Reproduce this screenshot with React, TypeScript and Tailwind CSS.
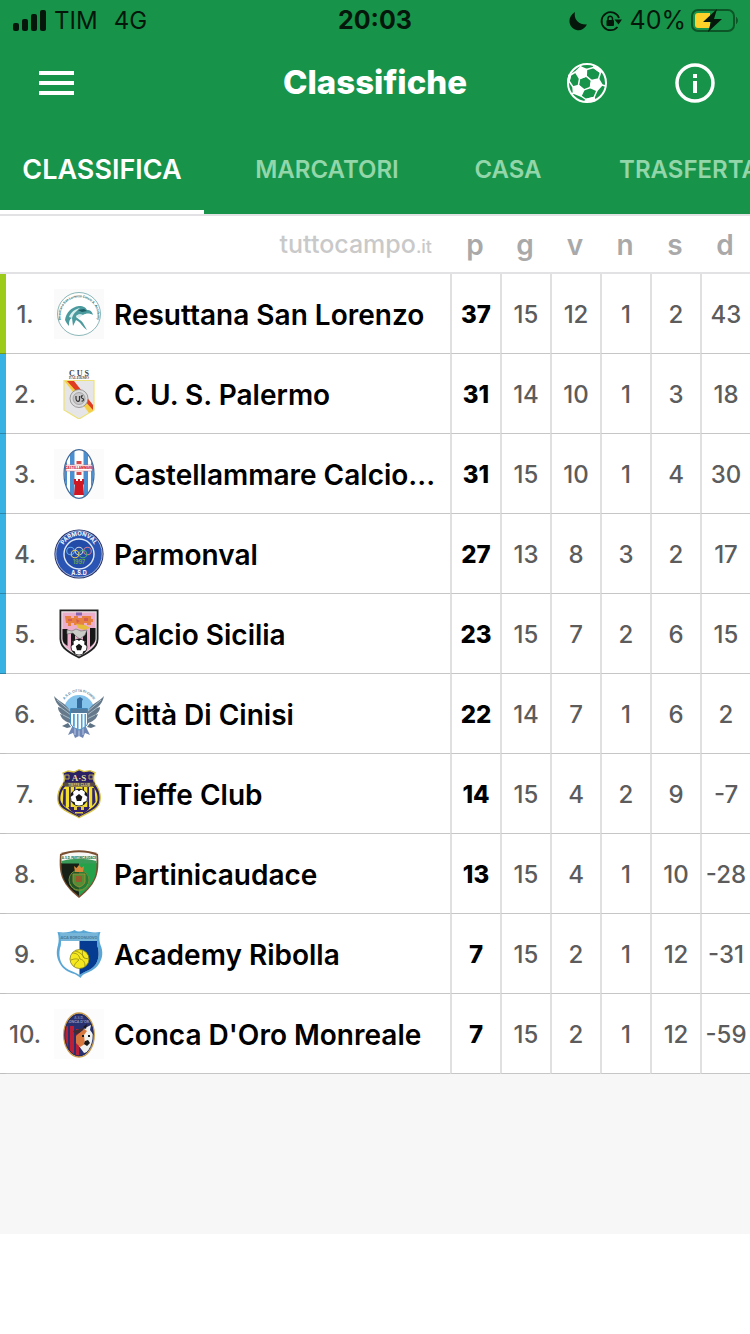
import type { ReactNode } from 'react'

type Team = {
  name: string
  zone: 'promotion' | 'playoff' | 'none'
  stats: number[]
  crest: ReactNode
}

const zoneColors = {
  promotion: 'bg-[#9ccb1a]',
  playoff: 'bg-[#38b2e2]',
  none: 'bg-white',
}

const columns = ['p', 'g', 'v', 'n', 's', 'd']

const tabs = [
  { label: 'MARCATORI', width: 'w-[246px]' },
  { label: 'CASA', width: 'w-[116px]' },
  { label: 'TRASFERTA', width: 'w-[246px]' },
]

function MiniBall({ cx, cy, r }: { cx: number; cy: number; r: number }) {
  return (
    <g transform={`translate(${cx} ${cy}) scale(${r / 10})`}>
      <circle r="10" fill="#fff" stroke="#222" strokeWidth="1" />
      <path d="M0-4 4-1 2.500 4h-5L-4-1zM-3-10 0-7.500 3-10zM7-7 6.500-3 10-1 9.500-5zM9 4 5 5.500 4.500 9 7 7zM-9 4-5 5.500-4.500 9-7 7zM-7-7-6.500-3-10-1-9.500-5z" fill="#161616" />
    </g>
  )
}

const resuttana = (
  <>
    <rect width="50" height="50" fill="#fafafa" />
    <circle cx="25" cy="25" r="21.500" fill="#fff" stroke="#5b9a9c" strokeWidth="0.700" />
    <path id="resArc" d="M8 34A18.500 18.500 0 1 1 42 34" fill="none" />
    <text fontSize="3.200" fill="#27747a" fontWeight="700">
      <textPath href="#resArc" startOffset="50%" textAnchor="middle">Resuttana San Lorenzo Calcio A. Academy</textPath>
    </text>
    <path d="M11 31c1-7 6-13 14-14 5 0 7 2 8 4 3 0 5 1 6 5-3-2-7-2-10 0-3-1-6-1-7 2 2 2 5 3 7 6l4 7c-5-3-6-8-11-10l-3 6-1-8c-3 1-3 5-3 8-2-2-3-4-4-6z" fill="#4b9a9e" />
    <path d="M15 28c2-5 6-8 11-9-3 3-6 4-8 10zM22 27c2-2 5-2 7-1l-4 3z" fill="#d6eeee" />
    <path d="M24 21l6-1 3 2-5 1z" fill="#1c5e64" />
  </>
)

const cus = (
  <>
    <text x="25" y="6.500" textAnchor="middle" fontSize="8" fill="#444" className="font-['Liberation_Serif',serif]">C U S</text>
    <text x="25" y="10.200" textAnchor="middle" fontSize="4" fill="#555" className="font-['Liberation_Serif',serif]">PALERMO</text>
    <path d="M10 11.500h30V41L25 50 10 41z" fill="#e6e6e8" stroke="#eee27a" strokeWidth="1.200" />
    <path d="M10.500 12h7L39 38v4l-4 2z" fill="#f4cf45" />
    <path d="M13 12h7l19 24v5z" fill="#e03d20" />
    <circle cx="25" cy="29.500" r="9" fill="#dcdcde" stroke="#888" strokeWidth="0.800" />
    <circle cx="25" cy="29.500" r="6" fill="#c8c8ca" stroke="#888" strokeWidth="0.600" />
    <path d="M22 27v3c.5 3 3 3 3.500 1v-4M29 27c-2-1-2.500 2-.5 2.500s1 3-1 2.500" fill="none" stroke="#333" strokeWidth="1.200" />
  </>
)

const castellammare = (
  <>
    <rect width="50" height="50" fill="#fbfbfb" />
    <clipPath id="casClip"><ellipse cx="25" cy="25" rx="14.500" ry="24" /></clipPath>
    <g clipPath="url(#casClip)">
      <rect width="50" height="50" fill="#fff" />
      <path d="M16 0h4.500v50H16zM29.500 0H34v50h-4.500zM10 5h3v40h-3zM37 5h3v40h-3z" fill="#4b8fd0" />
      <path d="M12 16h26v6H12z" fill="#fff" stroke="#d66" strokeWidth="0.500" />
      <path d="M22.500 12h5v3h-5zM22.500 23h5v3h-5z" fill="#d64a4b" />
      <text x="25" y="20.200" textAnchor="middle" fontSize="3" fontWeight="800" fill="#cf2024">CASTELLAMMARE</text>
      <path d="M20 30h2v2h2v-2h2v2h2v-2h2v5l-1 1 1 10H20l1-10-1-1z" fill="#cf1724" />
    </g>
    <ellipse cx="25" cy="25" rx="15" ry="24.300" fill="none" stroke="#40699b" strokeWidth="1.200" />
  </>
)

const parmonval = (
  <>
    <circle cx="25" cy="25" r="24.600" fill="#26336c" />
    <circle cx="25" cy="25" r="23.200" fill="#2b55b4" stroke="#dfe7f5" strokeWidth="0.700" />
    <circle cx="25" cy="25" r="15" fill="#234ba8" stroke="#e2ebf7" strokeWidth="1.400" />
    <path id="parArc" d="M8 20A17.500 17.500 0 0 1 42 20" fill="none" />
    <text fontSize="5.800" fontWeight="700" fill="#fff">
      <textPath href="#parArc" startOffset="50%" textAnchor="middle">PARMONVAL</textPath>
    </text>
    <text x="25" y="46" textAnchor="middle" fontSize="5.500" fontWeight="700" fill="#fff">A.S.D</text>
    <g fill="none" strokeWidth="1.100">
      <circle cx="16.500" cy="22" r="3.800" stroke="#62aceb" />
      <circle cx="25" cy="22" r="3.800" stroke="#c5ced8" />
      <circle cx="33.500" cy="22" r="3.800" stroke="#d57c92" />
      <circle cx="21" cy="25" r="3.800" stroke="#e1c95b" />
      <circle cx="29" cy="25" r="3.800" stroke="#4da978" />
    </g>
    <text x="25" y="34.500" textAnchor="middle" fontSize="5.500" fontWeight="700" fill="#64a84b">1997</text>
  </>
)

const sicilia = (
  <>
    <path d="M5.500.5h39V30c0 10-11 15-19.500 19.500C16.500 45 5.500 40 5.500 30z" fill="#222" />
    <path d="M7.300 2.300h35.400V30c0 8-9 13-17.700 17.500C16 43 7.300 38 7.300 30z" fill="#e8e8e8" />
    <path d="M8.500 3.500h33V30c0 8-8 12-16.500 16.500C16.500 42 8.500 38 8.500 30z" fill="#ecaecb" />
    <path d="M8.500 20h5v17c-3-2-5-4-5-7zM17 22h4v21l-4-3zM29 22h4v18l-4 3zM36 19h5.500v11c0 3-2 5-5.500 8z" fill="#171717" />
    <path d="M11 7h6v2h3V7h4v2h4V7h9v3h2v3h-2v3h-4v-2h-3v2H20v-2h-3v3h-3v-3h-2z" fill="#e7813f" />
    <path d="M14 10h4v2h-4zM22 10l4 2-3 2zM30 9h4v3h-4z" fill="#d55d54" />
    <path d="M22 15l9 1 5 3-6 2-6-2z" fill="#e7bd3c" />
    <path d="M22 3.500h6v3h-6z" fill="#8a65ae" />
    <path d="M13 21l5 1 4-2 5 2 6-1-2 5-5 4-3-2-4-4-6 1z" fill="#cbccc8" stroke="#666" strokeWidth="0.600" />
    <MiniBall cx={25} cy={38} r={8} />
  </>
)

const cinisi = (
  <>
    <circle cx="25" cy="21" r="15" fill="#84c4ec" />
    <path id="cinArc" d="M9 14A17 17 0 0 1 41 14" fill="none" />
    <text fontSize="3.200" fontWeight="700" fill="#4a86a8">
      <textPath href="#cinArc" startOffset="50%" textAnchor="middle">A.S.D. CITTA DI CINISI</textPath>
    </text>
    <g fill="#66798a">
      <path d="M0 7c5 6 12 7 16 15v12C9 32 7 28 6 25l3 1c-4-3-5-5-5-8l3 1C3 15 1 12 0 7z" />
      <path d="M50 7c-5 6-12 7-16 15v12c7-2 9-6 10-9l-3 1c4-3 5-5 5-8l-3 1c4-4 6-7 7-12z" />
    </g>
    <path d="M3 11l14 12M6 18l11 8M9 26l8 4M47 11 33 23M44 18l-11 8M41 26l-8 4" stroke="#b8cad6" strokeWidth="0.800" />
    <path d="M23 10l3-2 3 2-1 2v8h-5z" fill="#356b9c" />
    <path d="M18 38l-4 8 5-2 2 5 4-2 4 2 2-5 5 2-4-8z" fill="#6f86b5" />
    <path d="M21 39v7M25 39v8M29 39v7" stroke="#c4d2ea" strokeWidth="0.900" />
    <path d="M16.500 19.500h17V34c0 3-4 5-8.500 7-4.500-2-8.500-4-8.500-7z" fill="#f6fbff" stroke="#4289bb" strokeWidth="1" />
    <path d="M17 20h16v4H17z" fill="#517a9c" />
    <path d="M19 25h1.800v13L19 37zM23 25h1.500v15.500l-1.500-.5zM27 25h1.500v14.500l-1.500.5zM30.500 25h1.500v12l-1.500 1z" fill="#4ea2d9" />
    <path d="M8 37l6-3 3 4-4 1zM42 37l-6-3-3 4 4 1z" fill="#5d7285" />
  </>
)

const tieffe = (
  <>
    <path d="M25 .7l5 2 6-1 5 2c-2 4-2 7 0 11 4 5 6 10 5 17-1 9-13 12-21 17C17 44 5 41 4 32c-1-7 1-12 5-17 2-4 2-7 0-11l5-2 6 1z" fill="#2b2164" stroke="#d9c443" strokeWidth="1.300" />
    <path d="M11 17.500h28c4 5 5 9 4.500 14C42 38 34 41 25 47 16 41 8 38 6.500 31.500 6 26.500 7 22.500 11 17.500z" fill="#f3df2c" />
    <path d="M9.500 20h2.300v18l-3-3zM15 18h1.700v23l-1.700-1zM33.300 18H35v22l-1.700 1zM38.200 19h2.300l1 14-3.300 4zM20 18h1.500v6H20zM28.500 18H30v6h-1.500z" fill="#30266c" />
    <path d="M14 38l22 0-3 4-8 5-8-5z" fill="#32216d" />
    <path d="M20 37h3v4h-3zM27 37h3v4h-3zM21 43h8v1.500h-8z" fill="#e0c843" />
    <path d="M9 13.500h32v3.500H9z" fill="#564b45" />
    <text x="25" y="11.500" textAnchor="middle" fontSize="9" fontWeight="700" fill="#e4dc9c" className="font-['Liberation_Serif',serif]">A·S</text>
    <path d="M11 6h4v4h-4zM35 6h4v4h-4z" fill="none" stroke="#b7a655" strokeWidth="1" />
    <text x="25" y="16.500" textAnchor="middle" fontSize="3.500" fontWeight="700" fill="#d8cc83">TIEFFE CLUB</text>
    <MiniBall cx={25} cy={28.5} r={8.5} />
  </>
)

const partinicaudace = (
  <>
    <path d="M6 5C16 0 34 0 44 5c1 17 1 28-19 44C5 33 5 22 6 5z" fill="#7a4f31" />
    <path d="M7.500 6.500C17 2 33 2 42.500 6.500V14h-35z" fill="#f7f7f5" />
    <path d="M7.500 14H25v33C8 34 7.500 25 7.500 14z" fill="#162016" />
    <path d="M25 14h17.500c0 12-1 20-17.500 33z" fill="#25a14a" />
    <path d="M7.500 12C19 9 31 9 42.500 12v2.500h-35z" fill="#3a9b58" />
    <text x="25" y="9.500" textAnchor="middle" fontSize="2.800" fontWeight="800" fill="#267344">A.S.D. PARTINICAUDACE</text>
    <circle cx="25" cy="31" r="10" fill="#276d2e" fillOpacity="0.700" stroke="#6e8b35" strokeWidth="1" />
    <path d="M20 17l2.500 2 2.500-3 2.500 3 2.500-2-1 6h-8z" fill="#d8883a" />
    <path d="M19 25h12v7c0 3-3 5-6 6-3-1-6-3-6-6z" fill="#558d34" stroke="#a8923c" strokeWidth="0.800" />
    <path d="M22 27h6v6h-6z" fill="#9a5b2c" />
    <path d="M16 35c2 5 5 6 9 7 4-1 7-2 9-7" fill="none" stroke="#75953a" strokeWidth="1" />
  </>
)

const ribolla = (
  <>
    <path d="M3.500 3c7 1 14 0 17-2 3 2 6 2 9 0 4 2 10 3 17 2-2 5-1 9 0 13 3 7 2 13-1 18-4 7-11 9-15 11-2 1-3 2-4 4-2-2-4-3-6-4-7-2-12-5-15-11S2 23 4 16c1-4 1-8-.5-13z" fill="#5aa7d6" />
    <path d="M7 12h36c0 3 0 5 1 7 2 10-1 18-9 22-4 2-7 3-9.500 5C23 44 19 43 15 41 7 37 4 29 6 19c1-2 1-4 1-7z" fill="#fff" />
    <path d="M25.500 12H43c0 3 0 5 1 7 2 10-1 18-9 22-4 2-7 3-9.500 5z" fill="#053b91" />
    <path d="M6 4h38l-1 8H7z" fill="#78b6d9" />
    <text x="25" y="9.500" textAnchor="middle" fontSize="3.800" fontWeight="700" fill="#477996">ACA BORGONUOVO</text>
    <circle cx="25.500" cy="30" r="9.500" fill="#f5e81e" stroke="#81801d" strokeWidth="0.800" />
    <path d="M18 24c5 0 7 2 8 6M21 22c5 1 8 4 9 7l5 1M25 31c-3 2-5 5-5 7M26 30c4 1 5 4 5 7M17 31c3-1 6-2 8 0M30 29c-2-3-2-5-1-8" fill="none" stroke="#99921a" strokeWidth="0.900" />
  </>
)

const conca = (
  <>
    <rect width="50" height="50" fill="#fcfcfc" />
    <clipPath id="conClip"><ellipse cx="25" cy="26" rx="15" ry="21.500" /></clipPath>
    <g clipPath="url(#conClip)">
      <rect width="50" height="50" fill="#28306f" />
      <path d="M9 17h5v28H9zM16 17h4v31h-4zM22 20h3v28h-3z" fill="#bb1f38" />
      <path d="M31 19l6-3-1 5 5 7-3 14-8 2-5-7 2-10z" fill="#f0f0ee" />
      <path d="M22 27l8-7 3 2-3 4 1 9-5 3-4-4z" fill="#d9783e" />
      <path d="M29 18l4-3-1 5zM31 32l3-1 2 3-3 3-3-2zM28 26h2v2h-2zM34 26h2v2h-2z" fill="#181818" />
      <path d="M19 22l10-3v2l-7 5z" fill="#3d2d33" />
      <text x="25" y="14" textAnchor="middle" fontSize="3.600" fontWeight="700" fill="#8d95bd">CONCA D'ORO</text>
      <text x="25" y="10" textAnchor="middle" fontSize="3.200" fill="#8d95bd">A.S.D.</text>
    </g>
    <ellipse cx="25" cy="26" rx="15.300" ry="22" fill="none" stroke="#c99a48" strokeWidth="1.300" />
    <ellipse cx="25" cy="26" rx="14.200" ry="20.800" fill="none" stroke="#212a5a" strokeWidth="0.900" />
  </>
)

const teams: Team[] = [
  { name: 'Resuttana San Lorenzo', zone: 'promotion', stats: [37, 15, 12, 1, 2, 43], crest: resuttana },
  { name: 'C. U. S. Palermo', zone: 'playoff', stats: [31, 14, 10, 1, 3, 18], crest: cus },
  { name: 'Castellammare Calcio...', zone: 'playoff', stats: [31, 15, 10, 1, 4, 30], crest: castellammare },
  { name: 'Parmonval', zone: 'playoff', stats: [27, 13, 8, 3, 2, 17], crest: parmonval },
  { name: 'Calcio Sicilia', zone: 'playoff', stats: [23, 15, 7, 2, 6, 15], crest: sicilia },
  { name: 'Città Di Cinisi', zone: 'none', stats: [22, 14, 7, 1, 6, 2], crest: cinisi },
  { name: 'Tieffe Club', zone: 'none', stats: [14, 15, 4, 2, 9, -7], crest: tieffe },
  { name: 'Partinicaudace', zone: 'none', stats: [13, 15, 4, 1, 10, -28], crest: partinicaudace },
  { name: 'Academy Ribolla', zone: 'none', stats: [7, 15, 2, 1, 12, -31], crest: ribolla },
  { name: "Conca D'Oro Monreale", zone: 'none', stats: [7, 15, 2, 1, 12, -59], crest: conca },
]

function StatusBar() {
  return (
    <div className="grid h-10 grid-cols-[1fr_auto_1fr] items-center px-3 pt-0.5 text-2xl text-[#04170a]">
      <div className="flex items-center gap-2">
        <svg width="34" height="22" viewBox="0 0 34 22" fill="currentColor" aria-hidden="true">
          <rect x="1" y="13" width="6" height="8" rx="2" />
          <rect x="10" y="9" width="6" height="12" rx="2" />
          <rect x="19" y="4" width="6" height="17" rx="2" />
          <rect x="28" y="0" width="6" height="21" rx="2" />
        </svg>
        <span>TIM</span>
        <span className="ml-2">4G</span>
      </div>
      <span className="text-[25px] font-bold">20:03</span>
      <div className="flex items-center justify-end">
        <svg width="20" height="20" viewBox="0 0 20 20" fill="currentColor" aria-hidden="true">
          <path d="M7 1C5.500 8 10 14 19 13.500 16.500 18 12.500 20 8.500 19 1 17-2 6.500 7 1z" />
        </svg>
        <svg className="ml-3" width="22" height="22" viewBox="0 0 22 22" aria-hidden="true">
          <path d="M17.500 17A9 9 0 1 1 19 8" fill="none" stroke="currentColor" strokeWidth="1.800" />
          <path d="M14.500 9.500H22l-3.500 5z" fill="currentColor" />
          <rect x="6.500" y="10" width="7.500" height="6" rx="1" fill="currentColor" />
          <path d="M8 10V8.500a2.200 2.200 0 0 1 4.500 0V10" fill="none" stroke="currentColor" strokeWidth="1.500" />
        </svg>
        <span className="ml-2 text-[25px]">40%</span>
        <svg className="ml-1" width="48" height="26" viewBox="0 0 48 26" aria-hidden="true">
          <rect x="2" y="2" width="42" height="21" rx="6" fill="none" stroke="#0b5526" strokeWidth="2" />
          <path d="M46.500 9.500q2 3 0 6z" fill="#0b5526" stroke="#0b5526" />
          <path d="M8 5h12v15H8a3 3 0 0 1-3-3V8a3 3 0 0 1 3-3z" fill="#fcd12a" />
          <path d="M27 1 13 14h8l-3 10 14-13h-8z" fill="#04170a" />
        </svg>
      </div>
    </div>
  )
}

function Header() {
  return (
    <header className="grid h-[86px] grid-cols-[1fr_auto_1fr] items-center px-[35px] text-white">
      <button type="button" aria-label="Menu" className="justify-self-start p-1">
        <svg width="35" height="26" viewBox="0 0 35 26" fill="currentColor">
          <path d="M0 1h35v4H0zM0 11h35v4H0zM0 21h35v4H0z" />
        </svg>
      </button>
      <h1 className="text-[33px] font-extrabold">Classifiche</h1>
      <div className="flex items-center justify-end gap-[68px]">
        <button type="button" aria-label="Partite">
          <svg width="40" height="40" viewBox="0 0 40 40" fill="none" stroke="#fff" strokeWidth="1.500" strokeLinejoin="round">
            <circle cx="20" cy="20" r="19" strokeWidth="2" />
            <path d="M12.600 15.500 19.200 13.100 24.600 17.600 23.400 24.500 16.800 26.900 11.400 22.400z" />
            <path d="M19.500 6.500 26.500 4.500 33.500 9.500 31.500 16M30 27.500 27 34.500 19 36.500 14 33M6 24 2 18 3.500 12 8.500 9M13.500 4 13.500 2M35 22 38.500 23M6.500 30 4 31.500" />
            <g fill="#fff">
              <path d="M12.600 15.500 19.200 13.100 19.500 6.500 13.500 4 8.500 9z" />
              <path d="M24.600 17.600 23.400 24.500 30 27.500 35 22 31.500 16z" />
              <path d="M16.800 26.900 11.400 22.400 6 24 6.500 30 14 33z" />
              <path d="M26.500 4.500 33.500 9.500 35 8.500 27 2.500z" />
              <path d="M27 34.500 19 36.500 18 38.500 28 37.500z" />
              <path d="M3.500 12 2 18 1 18 2 12z" />
            </g>
          </svg>
        </button>
        <button type="button" aria-label="Informazioni">
          <svg width="40" height="40" viewBox="0 0 40 40" fill="none">
            <circle cx="20" cy="20" r="18" stroke="#fff" strokeWidth="3.500" />
            <path d="M18 11h4v4h-4zM18 18h4v12h-4z" fill="#fff" />
          </svg>
        </button>
      </div>
    </header>
  )
}

function Tabs() {
  return (
    <nav className="flex h-[88px] overflow-hidden font-semibold">
      <button type="button" className="w-[204px] shrink-0 border-b-4 border-white pt-1 text-[27px] text-white">
        CLASSIFICA
      </button>
      {tabs.map((tab) => (
        <button key={tab.label} type="button" className={`${tab.width} shrink-0 border-b-4 border-transparent pt-1 text-2xl text-[#93d6a9]`}>
          {tab.label}
        </button>
      ))}
    </nav>
  )
}

export default function App() {
  return (
    <div className="min-h-screen bg-white font-['Inter','Liberation_Sans',sans-serif]">
      <div className="bg-[#17944a]">
        <StatusBar />
        <Header />
        <Tabs />
      </div>

      <main className="border-t-2 border-[#e2e2e4] bg-[#f7f7f7] pb-40">
        <table className="w-full table-fixed border-separate border-spacing-0 bg-white">
          <colgroup>
            <col className="w-[6px]" />
            <col className="w-[38px]" />
            <col />
            {columns.map((column) => (
              <col key={column} className="w-[50px]" />
            ))}
          </colgroup>
          <thead>
            <tr className="h-[58px]">
              <th colSpan={3} className="border-b-2 border-[#e2e2e4] pr-[18px] pt-0.5 text-right text-[25px] font-medium text-[#c9c9c9]">
                tuttocampo<span className="text-lg">.it</span>
              </th>
              {columns.map((column) => (
                <th key={column} scope="col" className="border-b-2 border-[#e2e2e4] pt-0.5 text-[28px] font-semibold text-[#a9a9a9]">
                  {column}
                </th>
              ))}
            </tr>
          </thead>
          <tbody>
            {teams.map((team, i) => (
              <tr key={team.name} className="h-20">
                <td className={`border-b border-black/25 ${zoneColors[team.zone]}`} />
                <td className="border-b border-[#c6c6c6] pt-0.5 text-2xl font-medium text-[#5c5c5c]">
                  <div className="flex justify-center">{i + 1}.</div>
                </td>
                <th scope="row" className="border-b border-[#c6c6c6] pl-[10px] font-semibold">
                  <div className="flex items-center gap-[10px] whitespace-nowrap text-[28px] text-black">
                    <svg className="shrink-0" width="50" height="50" viewBox="0 0 50 50" aria-hidden="true">
                      {team.crest}
                    </svg>
                    <span className="pt-0.5">{team.name}</span>
                  </div>
                </th>
                {team.stats.map((value, j) => (
                  <td
                    key={columns[j]}
                    className={`border-b border-l-2 border-b-[#c6c6c6] border-l-[#e0e0e0] pt-0.5 text-2xl ${
                      j === 0 ? 'font-extrabold text-black' : 'font-medium text-[#5c5c5c]'
                    }`}
                  >
                    <div className="flex justify-center">{value}</div>
                  </td>
                ))}
              </tr>
            ))}
          </tbody>
        </table>
      </main>
    </div>
  )
}
